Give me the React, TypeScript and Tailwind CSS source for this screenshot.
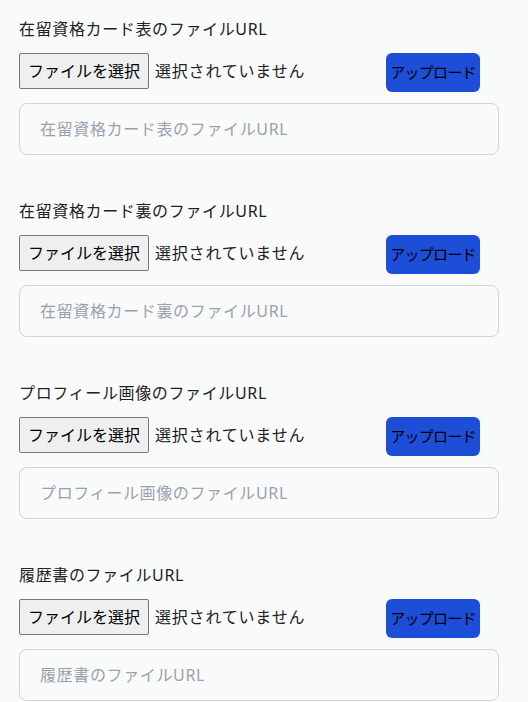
import React from 'react';

const fields = [
  '在留資格カード表のファイルURL',
  '在留資格カード裏のファイルURL',
  'プロフィール画像のファイルURL',
  '履歴書のファイルURL',
];

const FileField = ({ label }: { label: string }) => (
  <div className="mb-11">
    <label className="block text-base leading-6 tracking-[0.04em] text-[#222]">{label}</label>
    <div className="mt-3 flex w-[461px] items-start justify-between">
      <div className="flex items-center">
        <button className="h-[36px] w-[130px] rounded-[2px] border border-[#767676] bg-[#efefef] text-base text-black">
          ファイルを選択
        </button>
        <span className="ml-[6px] text-base tracking-[0.05em] text-[#222]">選択されていません</span>
      </div>
      <button className="h-[39px] w-[94px] rounded-md bg-[#1d4ed8] text-[15px] tracking-[-0.05em] text-black">
        アップロード
      </button>
    </div>
    <input
      type="text"
      placeholder={label}
      className="mt-[11px] block h-[52px] w-[480px] rounded-lg border border-gray-300 bg-transparent px-5 text-base tracking-[0.04em] text-gray-900 placeholder:text-gray-400"
    />
  </div>
);

export default function App() {
  return (
    <div
      className="min-h-screen bg-[#f9fafa] px-[19px] pt-[17px]"
      style={{ fontFamily: '"Noto Sans", "Noto Sans CJK JP", sans-serif' }}
    >
      {fields.map((f) => (
        <FileField key={f} label={f} />
      ))}
    </div>
  );
}
